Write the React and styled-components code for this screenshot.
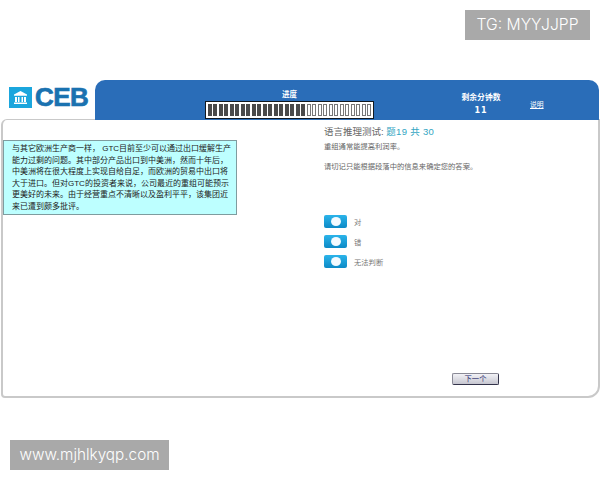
import styled, { createGlobalStyle } from "styled-components";

const GlobalStyle = createGlobalStyle`
  html, body {
    margin: 0;
    padding: 0;
    background: #fff;
  }
  body {
    font-family: "Liberation Sans", "Noto Sans CJK SC", sans-serif;
  }
`;

const Page = styled.div`
  position: relative;
  width: 600px;
  height: 480px;
  padding-top: 80px;
  box-sizing: border-box;
  overflow: hidden;
`;

const Watermark = styled.div`
  position: absolute;
  left: ${(p) => p.$left}px;
  top: ${(p) => p.$top}px;
  width: ${(p) => p.$width}px;
  height: 30px;
  background: #a9a9a9;
  color: #fff;
  font-family: "Inter", "Liberation Sans", sans-serif;
  font-size: ${(p) => p.$size}px;
  font-weight: 300;
  line-height: 30px;
  text-align: center;
  white-space: nowrap;
`;

const Header = styled.div`
  display: flex;
  height: 40px;
  padding-right: 1px;
`;

const Logo = styled.div`
  width: 95px;
  flex: none;
  display: flex;
  align-items: flex-start;
  gap: 3px;
  padding: 7px 0 0 9px;
  box-sizing: border-box;
`;

const LogoText = styled.span`
  font-family: "Liberation Sans", sans-serif;
  font-size: 26px;
  font-weight: 700;
  line-height: 21px;
  color: #1a72b0;
  -webkit-text-stroke: 0.7px #1a72b0;
  letter-spacing: -0.6px;
`;

const Banner = styled.div`
  flex: 1;
  display: grid;
  grid-template-columns: 110px 169px 72px 70px 1fr;
  background: #2a6db8;
  border-radius: 10px 10px 0 0;
  color: #fff;
`;

const ProgressCol = styled.div`
  grid-column: 2;
  display: flex;
  flex-direction: column;
  align-items: center;
  padding-top: 10px;
`;

const ProgressLabel = styled.div`
  font-size: 7.5px;
  line-height: 10px;
  font-weight: 700;
  margin-bottom: 1px;
`;

const ProgressBar = styled.div`
  width: 169px;
  height: 18px;
  box-sizing: border-box;
  padding: 2px 1px;
  display: flex;
  background: #fff;
  border: 1px solid #101820;
`;

const Tick = styled.span`
  flex: 1;
  margin: 0 0.7px;
  box-sizing: border-box;
  background: ${(p) => (p.$done ? "#4a4a4a" : "#fff")};
  border: 1px solid ${(p) => (p.$done ? "#4a4a4a" : "#777")};
`;

const TimeCol = styled.div`
  grid-column: 4;
  text-align: center;
  padding-top: 13px;
  font-size: 7.8px;
  font-weight: 700;
  line-height: 10px;
`;

const TimeValue = styled.div`
  font-family: "DejaVu Sans", sans-serif;
  font-size: 8px;
  margin-top: 3px;
  letter-spacing: 1px;
`;

const HelpLink = styled.a`
  grid-column: 5;
  padding: 20px 0 0 14px;
  font-size: 6.8px;
  line-height: 9px;
  color: #fff;
  text-decoration: underline;
`;

const Panel = styled.div`
  height: 279px;
  margin: -1px 0 0 1px;
  width: 599px;
  box-sizing: border-box;
  border: 2px solid #c9c9c9;
  border-top-width: 1px;
  border-radius: 6px 0 12px 4px;
  display: grid;
  grid-template-columns: 321px 1fr;
`;

const LeftCol = styled.div`
  padding-top: 20px;
`;

const Passage = styled.div`
  width: 234px;
  height: 75px;
  box-sizing: border-box;
  padding: 2px 0 0 8px;
  background: #bdffff;
  border: 1px solid #7f9c9f;
  font-size: 8px;
  line-height: 11.6px;
  color: #222;
`;

const Line = styled.div`
  white-space: pre;
`;

const RightCol = styled.div`
  position: relative;
  display: flex;
  flex-direction: column;
  padding-top: 5px;
`;

const Title = styled.div`
  font-size: 9.5px;
  line-height: 13px;
  color: #666;
`;

const TitleCount = styled.span`
  color: #32a5c2;
  letter-spacing: 0.3px;
`;

const Note = styled.div`
  font-size: 7.3px;
  line-height: 10px;
  color: #666;
  margin-top: ${(p) => p.$gap}px;
`;

const Options = styled.div`
  display: flex;
  flex-direction: column;
  gap: 7px;
  margin-top: 43px;
`;

const Option = styled.label`
  display: flex;
  align-items: center;
  gap: 7px;
  height: 13px;
  font-size: 7.3px;
  color: #777;
`;

const Radio = styled.span`
  width: 23px;
  height: 13px;
  flex: none;
  display: flex;
  align-items: center;
  justify-content: center;
  border-radius: 2px;
  background: linear-gradient(#2bb4ea, #0d8ac6);
  &::after {
    content: "";
    width: 10px;
    height: 9px;
    border-radius: 50%;
    background: #f4fbff;
  }
`;

const NextButton = styled.button`
  position: absolute;
  left: 128px;
  top: 253px;
  width: 47px;
  height: 12px;
  padding: 0;
  border: 1px solid #8a8a96;
  border-right-color: #33334a;
  border-bottom-color: #33334a;
  border-radius: 2px;
  background: linear-gradient(#f2f2f6, #c6c6d0);
  color: #25256a;
  font-family: inherit;
  font-size: 7.3px;
  line-height: 10px;
`;

const LogoIcon = () => (
  <svg width="23" height="21" viewBox="0 0 23 21">
    <rect width="23" height="21" fill="#1ba6dd" />
    <path d="M11.5 4 L18 7.6 V8.8 H5 V7.6 Z" fill="#fff" />
    <path
      d="M6 10h2v5H6zM9 10h1.5v5H9zM12.5 10H14v5h-1.5zM15 10h2v5h-2zM5 15.5h13V17H5z"
      fill="#fff"
    />
  </svg>
);

const passage = [
  "与其它欧洲生产商一样， GTC目前至少可以通过出口缓解生产",
  "能力过剩的问题。其中部分产品出口到中美洲，然而十年后，",
  "中美洲将在很大程度上实现自给自足，而欧洲的贸易中出口将",
  "大于进口。但对GTC的投资者来说，公司最近的重组可能预示",
  "更美好的未来。由于经营重点不清晰以及盈利平平，该集团近",
  "来已遭到颇多批评。",
];

const options = ["对", "错", "无法判断"];

const App = () => {
  return (
    <Page>
      <GlobalStyle />
      <Watermark $left={465} $top={10} $width={125} $size={15.7}>TG: MYYJJPP</Watermark>
      <Header>
        <Logo>
          <LogoIcon />
          <LogoText>CEB</LogoText>
        </Logo>
        <Banner>
          <ProgressCol>
            <ProgressLabel>进度</ProgressLabel>
            <ProgressBar>
              {Array.from({ length: 30 }, (_, i) => (
                <Tick key={i} $done={i < 18} />
              ))}
            </ProgressBar>
          </ProgressCol>
          <TimeCol>
            剩余分钟数
            <TimeValue>11</TimeValue>
          </TimeCol>
          <HelpLink>说明</HelpLink>
        </Banner>
      </Header>
      <Panel>
        <LeftCol>
          <Passage>
            {passage.map((line) => (
              <Line key={line}>{line}</Line>
            ))}
          </Passage>
        </LeftCol>
        <RightCol>
          <Title>
            语言推理测试: <TitleCount>题19 共 30</TitleCount>
          </Title>
          <Note $gap={4}>重组通常能提高利润率。</Note>
          <Note $gap={10}>请切记只能根据段落中的信息来确定您的答案。</Note>
          <Options>
            {options.map((o) => (
              <Option key={o}>
                <Radio />
                {o}
              </Option>
            ))}
          </Options>
          <NextButton>下一个</NextButton>
        </RightCol>
      </Panel>
      <Watermark $left={10} $top={440} $width={159} $size={15.3}>www.mjhlkyqp.com</Watermark>
    </Page>
  );
};

export default App;
